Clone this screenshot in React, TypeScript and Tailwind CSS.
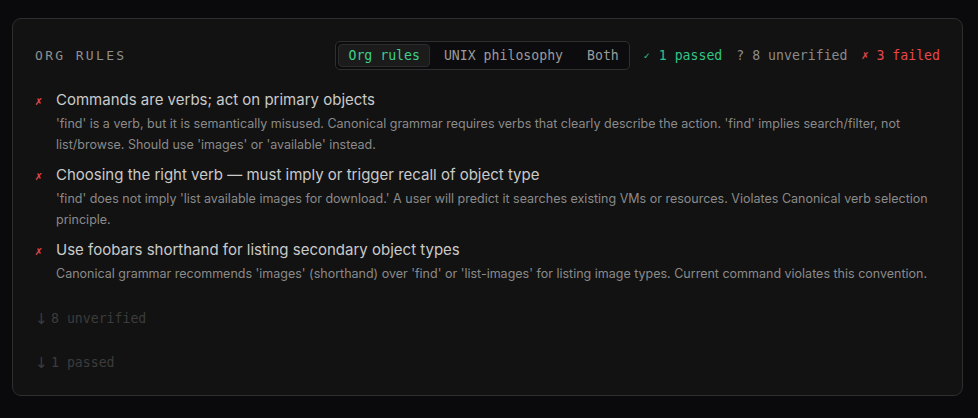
import React from "react";

const mono = { fontFamily: '"DejaVu Sans Mono", "Liberation Mono", monospace' };

const rules = [
  {
    title: "Commands are verbs; act on primary objects",
    desc: "'find' is a verb, but it is semantically misused. Canonical grammar requires verbs that clearly describe the action. 'find' implies search/filter, not list/browse. Should use 'images' or 'available' instead.",
  },
  {
    title: "Choosing the right verb — must imply or trigger recall of object type",
    desc: "'find' does not imply 'list available images for download.' A user will predict it searches existing VMs or resources. Violates Canonical verb selection principle.",
  },
  {
    title: "Use foobars shorthand for listing secondary object types",
    desc: "Canonical grammar recommends 'images' (shorthand) over 'find' or 'list-images' for listing image types. Current command violates this convention.",
  },
];

export default function App() {
  return (
    <div
      className="min-h-[418px] w-full bg-[#0a0a0c] pt-[18px] pl-[12px] pr-[15px] pb-[21px]"
      style={{ fontFamily: 'Inter, "Noto Sans", sans-serif' }}
    >
      <div className="rounded-[9px] border border-[#2e2e2e] bg-[#121212] px-[22px] pt-[22px] pb-[23px]">
        <div className="flex items-center justify-between h-[29px]">
          <div className="text-[13px] tracking-[0.18em] text-[#8f8f8f]" style={mono}>
            ORG RULES
          </div>
          <div className="flex items-center" style={mono}>
            <div className="flex items-center gap-[2px] rounded-[5px] border border-[#2f2f2f] bg-[#0c0c0e] p-[2px] text-[13.2px]">
              <div className="rounded-[4px] border border-[#2c2c2c] bg-[#1b1b1b] px-[9px] h-[23px] flex items-center text-[#3ecf8e]">
                Org rules
              </div>
              <div className="px-[12px] h-[23px] flex items-center text-[#9a9a9a]">UNIX philosophy</div>
              <div className="pl-[10px] pr-[8px] h-[23px] flex items-center text-[#9a9a9a]">Both</div>
            </div>
            <div className="ml-[14px] flex items-center gap-[14px] text-[13.2px]">
              <span className="flex items-center text-[#2fc585]">
                <span className="inline-block w-[15px] text-[10px]">✓</span>1 passed
              </span>
              <span className="text-[#8a8a8a]">? 8 unverified</span>
              <span className="flex items-center text-[#e5484d]">
                <span className="inline-block w-[15px] text-[12px]">✗</span>3 failed
              </span>
            </div>
          </div>
        </div>

        <div className="mt-[19px] flex flex-col gap-[9px]">
          {rules.map((r) => (
            <div key={r.title} className="flex">
              <div className="w-[21px] shrink-0 pt-[4px] text-[12px] leading-[16px] text-[#e5484d]" style={mono}>
                ✗
              </div>
              <div className="min-w-0">
                <div className="text-[15px] leading-[22px] text-[#cacaca]">{r.title}</div>
                <div className="mt-[2px] text-[12.5px] leading-[21px] text-[#8a8a8a]">{r.desc}</div>
              </div>
            </div>
          ))}
        </div>

        <div className="mt-[26px] flex flex-col gap-[26px] text-[13.2px] text-[#3c3c3c]" style={mono}>
          <div className="flex items-center leading-[18px]">
            <span className="inline-block w-[16px] text-[15px]" style={{ fontFamily: '"DejaVu Sans", sans-serif' }}>↓</span>8 unverified
          </div>
          <div className="flex items-center leading-[18px]">
            <span className="inline-block w-[16px] text-[15px]" style={{ fontFamily: '"DejaVu Sans", sans-serif' }}>↓</span>1 passed
          </div>
        </div>
      </div>
    </div>
  );
}
